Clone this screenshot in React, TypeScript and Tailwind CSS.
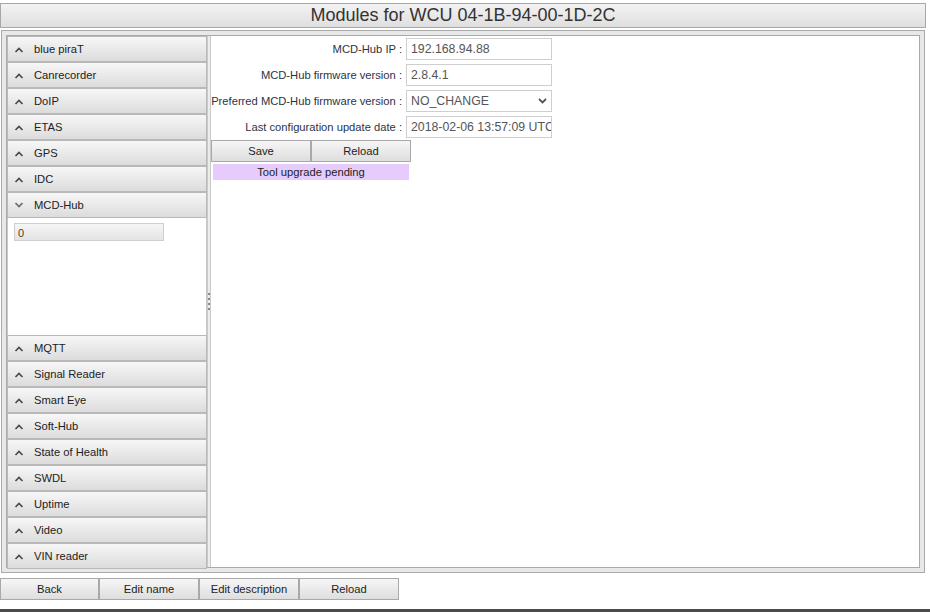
import React from 'react';

const above = ['blue piraT', 'Canrecorder', 'DoIP', 'ETAS', 'GPS', 'IDC'];
const below = ['MQTT', 'Signal Reader', 'Smart Eye', 'Soft-Hub', 'State of Health', 'SWDL', 'Uptime', 'Video', 'VIN reader'];

function Chevron({ up }: { up: boolean }) {
  return (
    <svg width="10" height="7" viewBox="0 0 10 7" className="shrink-0">
      <polyline
        points={up ? '1.5,6 5,2.5 8.5,6' : '1.5,1 5,4.5 8.5,1'}
        fill="none"
        stroke={up ? '#4a4a4a' : '#6a6a6a'}
        strokeWidth="1.7"
      />
    </svg>
  );
}

function Header({ name, open }: { name: string; open?: boolean }) {
  return (
    <div className="flex h-[26px] shrink-0 items-center gap-[10px] border border-[#b9b9b9] bg-gradient-to-b from-[#f7f7f7] to-[#dcdcdc] pl-[6px] text-[11.2px] text-[#222]">
      <Chevron up={!open} />
      <span>{name}</span>
    </div>
  );
}

function Row({ label, children }: { label: string; children: React.ReactNode }) {
  return (
    <div className="flex h-[26px] items-center">
      <div className="w-[195px] shrink-0 whitespace-nowrap pr-[4px] text-right text-[11.2px] text-[#2b3445]">{label} :</div>
      {children}
    </div>
  );
}

function Field({ value }: { value: string }) {
  return (
    <div className="flex h-[22px] w-[146px] items-center overflow-hidden whitespace-nowrap border border-[#cfcfcf] bg-white pl-[4px] text-[12.3px] text-[#555]">
      {value}
    </div>
  );
}

const btn =
  'flex h-[22px] items-center justify-center border border-[#a9a9a9] bg-gradient-to-b from-[#f6f6f6] to-[#dedede] text-[11.2px] text-[#222]';

export default function App() {
  return (
    <div className="relative h-[612px] w-[930px] overflow-hidden bg-white font-['Liberation_Sans',Arial,sans-serif]">
      <div className="mt-[3px] flex h-[25px] w-[926px] items-center justify-center border border-[#a8a8a8] bg-gradient-to-b from-[#f3f3f3] to-[#dfdfdf] font-['Liberation_Sans_Narrow','Liberation_Sans',sans-serif] text-[18px] text-[#333]">
        Modules for WCU 04-1B-94-00-1D-2C
      </div>

      <div className="ml-[1px] mt-[2px] h-[543px] w-[924px] border border-[#aaa] bg-[#e8e8e8] p-[4px]">
        <div className="flex h-full border border-[#aaa] bg-white">
          <div className="flex w-[200px] flex-col bg-[#e8e8e8]">
            {above.map((n) => (
              <Header key={n} name={n} />
            ))}
            <Header name="MCD-Hub" open />
            <div className="h-[117px] shrink-0 border-x border-[#c8c8c8] bg-white pl-[6px] pt-[5px]">
              <div className="flex h-[18px] w-[150px] items-end border border-[#cfcfcf] bg-gradient-to-b from-[#f6f6f6] to-[#e4e4e4] pl-[3px] text-[11px] leading-[14px] text-[#5a3a1a]">
                0
              </div>
            </div>
            {below.map((n) => (
              <Header key={n} name={n} />
            ))}
          </div>

          <div className="flex w-[4px] flex-col items-center justify-center gap-[3px] border-x border-[#c9c9c9] bg-[#ececec]">
            {[0, 1, 2, 3].map((i) => (
              <div key={i} className="h-[2px] w-[2px] bg-[#888]" />
            ))}
          </div>

          <div className="flex-1">
            <Row label="MCD-Hub IP">
              <Field value="192.168.94.88" />
            </Row>
            <Row label="MCD-Hub firmware version">
              <Field value="2.8.4.1" />
            </Row>
            <Row label="Preferred MCD-Hub firmware version">
              <div className="flex h-[22px] w-[146px] items-center justify-between border border-[#cfcfcf] bg-white pl-[4px] pr-[4px] text-[12.3px] text-[#555]">
                <span>NO_CHANGE</span>
                <svg width="9" height="6" viewBox="0 0 9 6">
                  <polyline points="1,1 4.5,4.5 8,1" fill="none" stroke="#555" strokeWidth="1.8" />
                </svg>
              </div>
            </Row>
            <Row label="Last configuration update date">
              <Field value="2018-02-06 13:57:09 UTC" />
            </Row>
            <div className="flex">
              <div className={`${btn} w-[100px]`}>Save</div>
              <div className={`${btn} w-[100px]`}>Reload</div>
            </div>
            <div className="ml-[2px] mt-[2px] flex h-[16px] w-[196px] items-center justify-center bg-[#e5ccfc] text-[11.2px] text-[#222]">
              Tool upgrade pending
            </div>
          </div>
        </div>
      </div>

      <div className="mt-[5px] flex">
        <div className={`${btn} w-[99px]`}>Back</div>
        <div className={`${btn} w-[100px]`}>Edit name</div>
        <div className={`${btn} w-[100px]`}>Edit description</div>
        <div className={`${btn} w-[100px]`}>Reload</div>
      </div>

      <div className="absolute bottom-0 left-0 h-[3px] w-full bg-[#4a4a4a]" />
    </div>
  );
}
